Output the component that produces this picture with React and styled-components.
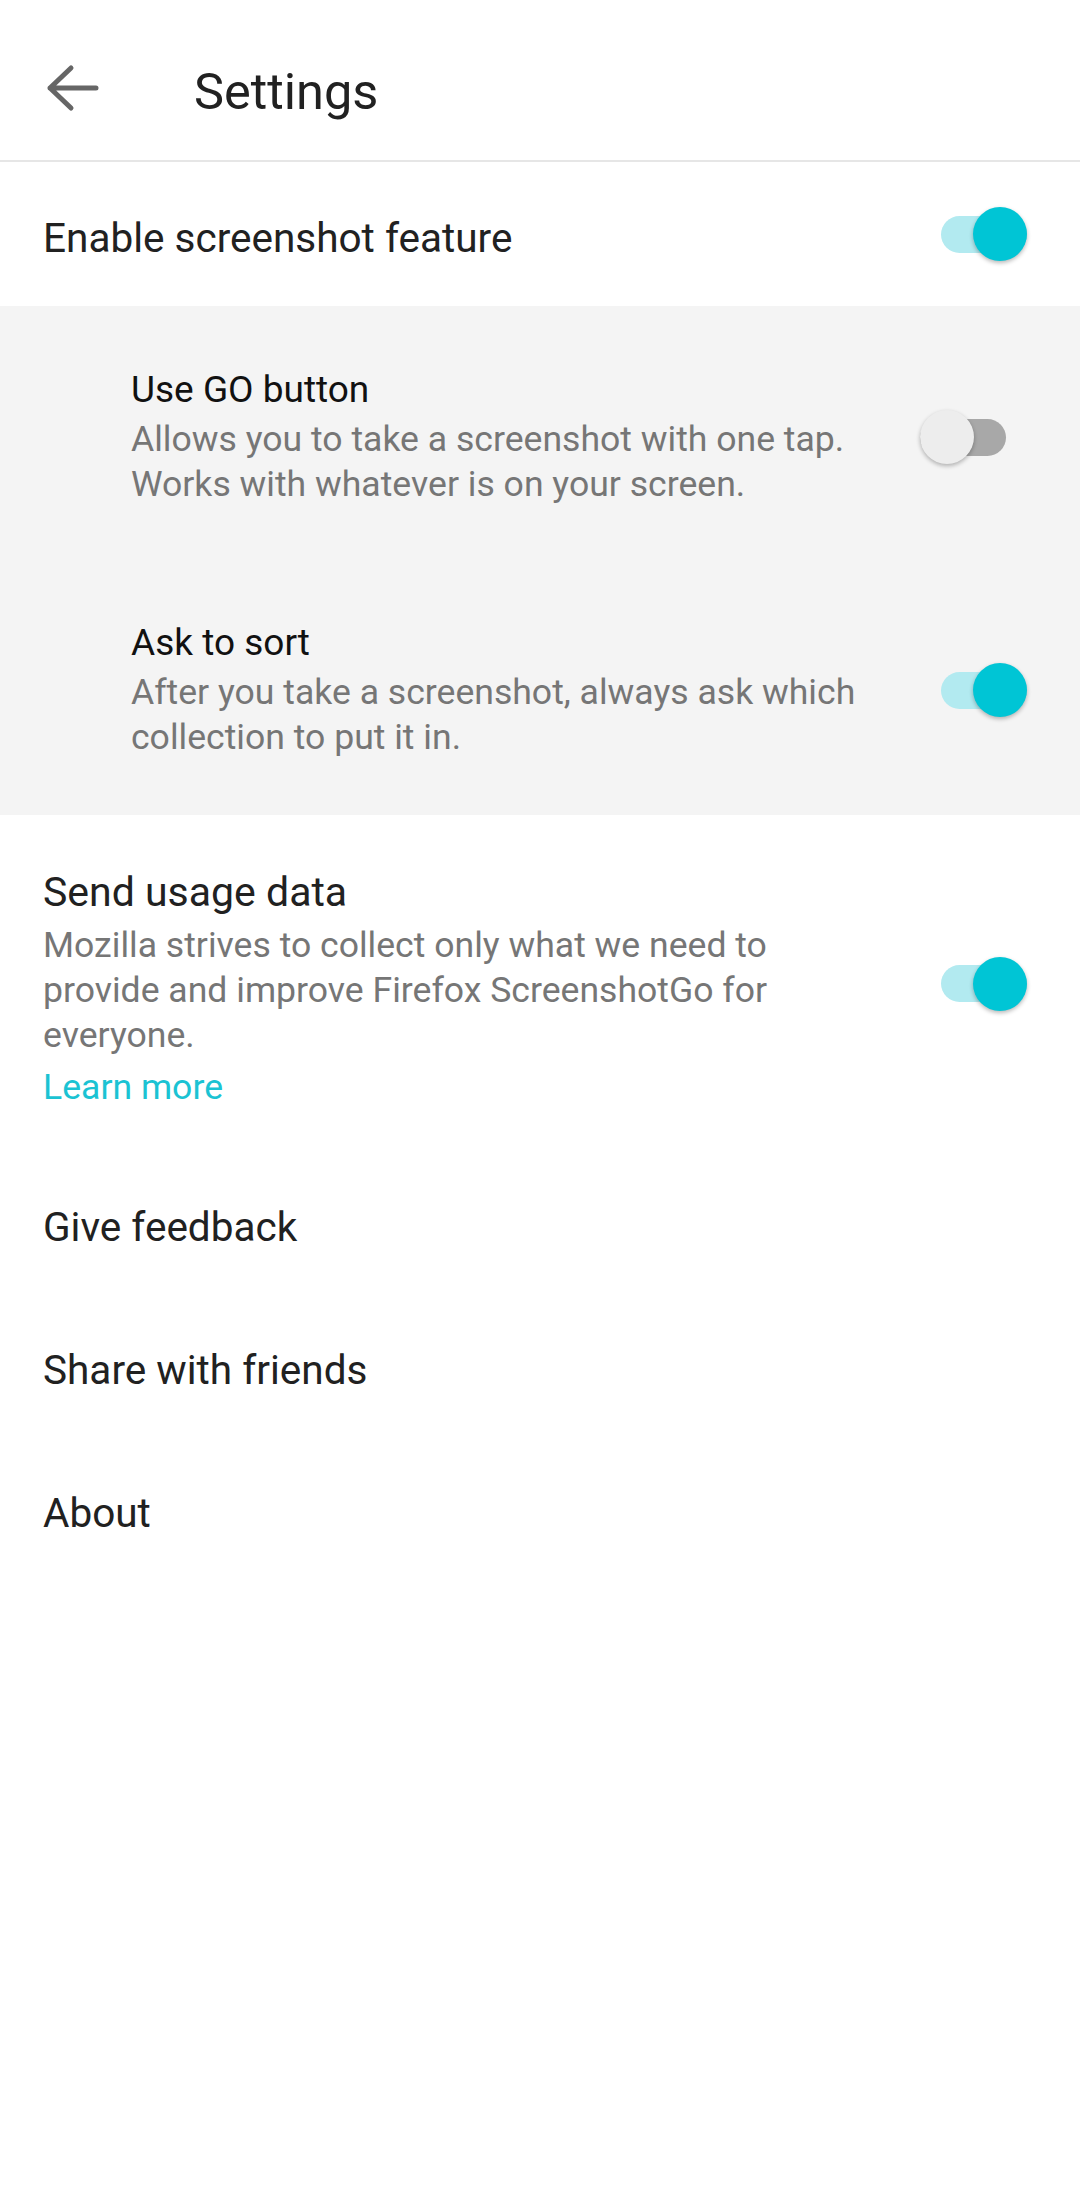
import styled, { createGlobalStyle } from "styled-components";

const GlobalStyle = createGlobalStyle`
  html, body {
    margin: 0;
    padding: 0;
    background: #ffffff;
  }
  body {
    font-family: Roboto, "Noto Sans", "Liberation Sans", sans-serif;
    -webkit-font-smoothing: antialiased;
  }
`

const Page = styled.div`
  width: 1080px;
  min-height: 2211px;
  background: #ffffff;
`

const Header = styled.header`
  height: 160px;
  display: flex;
  align-items: center;
  border-bottom: 2px solid #e6e6e6;
`

const BackButton = styled.button`
  width: 54px;
  height: 48px;
  margin-left: 46px;
  margin-top: 16px;
  padding: 0;
  border: none;
  background: none;
  display: flex;
  align-items: center;
  justify-content: center;
`

const Title = styled.h1`
  margin: 0 0 0 94px;
  font-size: 50.5px;
  font-weight: 400;
  color: #212121;
  padding-top: 22px;
`

const Row = styled.div`
  display: flex;
  align-items: center;
  justify-content: space-between;
  box-sizing: border-box;
  height: ${p => p.$height || 143}px;
  padding: 0 ${p => p.$right || 53}px 0 43px;
`

const RowLabel = styled.div`
  font-size: 40.5px;
  color: #212121;
  line-height: 50px;
  padding-top: ${p => p.$shift || 0}px;
`

const SubSection = styled.section`
  background: #f4f4f4;
`

const SubItem = styled.div`
  display: flex;
  align-items: center;
  justify-content: space-between;
  padding: 61px ${p => p.$right || 53}px ${p => p.$bottom || 52}px 131px;
`

const ItemText = styled.div`
  display: flex;
  flex-direction: column;
  max-width: ${p => p.$max || 780}px;
`

const SubTitle = styled.div`
  font-size: 37px;
  line-height: 46px;
  color: #111111;
`

const Summary = styled.div`
  font-size: 35.6px;
  line-height: 45px;
  color: #767676;
  margin-top: ${p => p.$gap || 4}px;
`

const ItemTitle = styled.div`
  font-size: 41px;
  line-height: 46px;
  color: #212121;
`

const LearnMore = styled.a`
  font-size: 35.6px;
  line-height: 45px;
  color: #1bc3d3;
  margin-top: 7px;
  text-decoration: none;
`

const UsageItem = styled.div`
  display: flex;
  align-items: center;
  justify-content: space-between;
  padding: 54px 53px 43px 43px;
`

const Switch = styled.div`
  position: relative;
  flex: none;
  width: 86px;
  height: 54px;
  display: flex;
  align-items: center;
  margin-bottom: ${p => p.$lift || 0}px;
`

const Track = styled.div`
  width: 100%;
  height: 37px;
  border-radius: 19px;
  background: ${p => (p.$on ? "#b2eaf0" : "#a8a8a8")};
`

const Thumb = styled.div`
  position: absolute;
  top: 0;
  ${p => (p.$on ? "right: 0;" : "left: 0;")}
  width: 54px;
  height: 54px;
  border-radius: 50%;
  background: ${p => (p.$on ? "#00c5d5" : "#ededed")};
  box-shadow: 0 2px 4px rgba(0, 0, 0, 0.28);
`

const Toggle = ({ on, lift }) => (
  <Switch $lift={lift}>
    <Track $on={on} />
    <Thumb $on={on} />
  </Switch>
)

const ArrowBack = () => (
  <svg width="54" height="48" viewBox="0 0 54 48" fill="none">
    <path d="M4 24H50M25 4L4 24L25 44" stroke="#666666" strokeWidth="5" strokeLinecap="round" strokeLinejoin="round" />
  </svg>
)

const App = () => {
  return (
    <Page>
      <GlobalStyle />
      <Header>
        <BackButton>
          <ArrowBack />
        </BackButton>
        <Title>Settings</Title>
      </Header>

      <Row $height={144}>
        <RowLabel $shift={8}>Enable screenshot feature</RowLabel>
        <Toggle on />
      </Row>

      <SubSection>
        <SubItem $right={74}>
          <ItemText>
            <SubTitle>Use GO button</SubTitle>
            <Summary>
              Allows you to take a screenshot with one tap.
              <br />
              Works with whatever is on your screen.
            </Summary>
          </ItemText>
          <Toggle on={false} />
        </SubItem>
        <SubItem $bottom={55}>
          <ItemText>
            <SubTitle>Ask to sort</SubTitle>
            <Summary>
              After you take a screenshot, always ask which
              <br />
              collection to put it in.
            </Summary>
          </ItemText>
          <Toggle on />
        </SubItem>
      </SubSection>

      <UsageItem>
        <ItemText $max={800}>
          <ItemTitle>Send usage data</ItemTitle>
          <Summary $gap={8}>
            Mozilla strives to collect only what we need to
            <br />
            provide and improve Firefox ScreenshotGo for
            <br />
            everyone.
          </Summary>
          <LearnMore href="#">Learn more</LearnMore>
        </ItemText>
        <Toggle on lift={12} />
      </UsageItem>

      <Row>
        <RowLabel $shift={4}>Give feedback</RowLabel>
      </Row>
      <Row>
        <RowLabel $shift={4}>Share with friends</RowLabel>
      </Row>
      <Row>
        <RowLabel $shift={4}>About</RowLabel>
      </Row>
    </Page>
  );
};

export default App
